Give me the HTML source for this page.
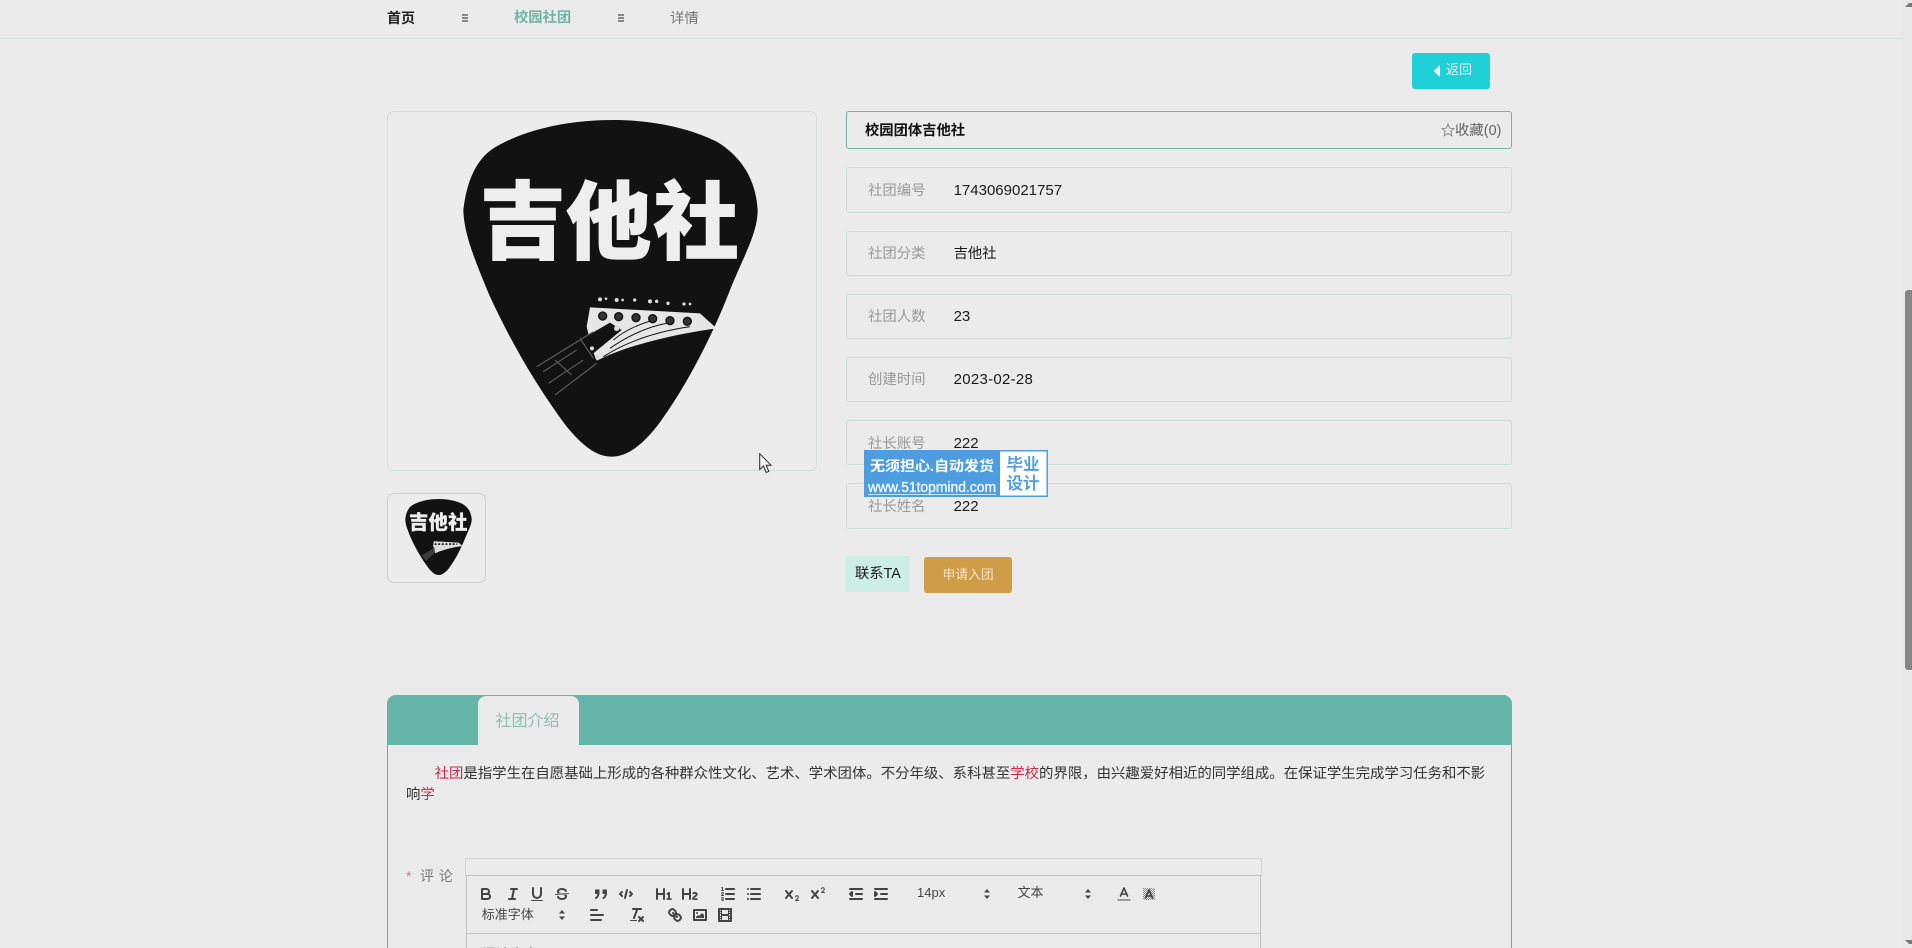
<!DOCTYPE html>
<html lang="zh"><head><meta charset="utf-8"><title>校园社团详情</title>
<style>
html,body{margin:0;padding:0;width:1912px;height:948px;overflow:hidden;background:#ebebeb}
body{position:relative;font-family:"Liberation Sans","Noto Sans CJK SC",sans-serif;font-size:14.4px;color:#333}
.a{position:absolute;box-sizing:border-box}
.t{position:absolute;line-height:20px;white-space:nowrap}
.row{position:absolute;left:846px;width:666px;box-sizing:border-box;border:1px solid #cddcd8;border-radius:3px}
.lb{color:#9a9a9a;left:868px}
.v{color:#1a1a1a;left:953.6px;font-size:15px}
.i{position:absolute;width:18px;height:18px;fill:none;stroke:#444;stroke-width:2;stroke-linecap:round;stroke-linejoin:round}
.i .f{fill:#444;stroke:none}
.i .n{stroke-width:1}
.p{color:#444;font-size:13px}
em{font-style:normal;color:#cc2a45}
</style></head><body>

<!-- header -->
<div class="a" style="left:0;top:38px;width:1903px;height:1px;background:#d6dfdc"></div>
<div class="t" style="left:387px;top:8px;font-size:14px;font-weight:700;color:#222">首页</div>
<svg class="a" style="left:461px;top:14px" width="8" height="8" viewBox="0 0 8 8"><path d="M1 1H7M1 4H7M1 7H7" stroke="#222" stroke-width="1"/></svg>
<div class="t" style="left:514px;top:8px;font-size:14.3px;font-weight:700;color:#6fb5a8">校园社团</div>
<svg class="a" style="left:617px;top:14px" width="8" height="8" viewBox="0 0 8 8"><path d="M1 1H7M1 4H7M1 7H7" stroke="#222" stroke-width="1"/></svg>
<div class="t" style="left:670px;top:9px;font-size:14.4px;color:#777">详情</div>

<!-- back -->
<div class="a" style="left:1412px;top:53px;width:78px;height:36px;background:#1fd0d9;border-radius:3px"></div>
<svg class="a" style="left:1433px;top:65px" width="8" height="12" viewBox="0 0 8 12"><path d="M7 0V12L1 6.5V5.5Z" fill="#e9fbfc"/></svg>
<div class="t" style="left:1446px;top:60px;font-size:13px;color:#d6f6f8">返回</div>

<!-- big image -->
<div class="a" style="left:387px;top:111px;width:430px;height:360px;border:1px solid #d2e0dc;border-radius:7px;background:#ececec"></div>
<svg class="a" style="left:380px;top:100px" width="460" height="380" viewBox="0 0 1380 1140">
<path d="M700 60C560 60 430 90 340 145C295 175 262 230 250 330C252 400 280 470 330 590C390 720 470 860 560 980C610 1040 650 1070 695 1070C745 1070 790 1030 830 980C920 860 1000 700 1050 570C1090 470 1133 400 1133 330C1128 240 1085 170 1010 125C930 85 820 60 700 60Z" fill="#121212"/>
<g font-family="'Noto Sans CJK SC',sans-serif" font-weight="900" font-size="256" fill="#eee" stroke="#eee" stroke-width="3">
<text x="300" y="457">吉</text><text x="558" y="457">他</text><text x="820" y="457">社</text></g>
<path d="M630 622L960 640L1010 685C900 700 760 730 665 775L650 782L635 745L620 680Z" fill="#e6e6e6"/>
<path d="M600 720L690 668L725 690L640 760Z" fill="#121212"/>
<path d="M470 800L640 695M525 885L650 790M525 780L575 825M600 715L640 775M490 815L590 750M505 850L610 780" stroke="#666" stroke-width="3" fill="none"/>
<g stroke="#121212" stroke-width="3" fill="none"><path d="M670 770C740 725 830 695 930 680M690 745C740 710 800 680 870 668M700 720C730 695 770 675 815 662"/></g>
<g fill="#333" stroke="#121212" stroke-width="4"><circle cx="668" cy="648" r="12"/><circle cx="716" cy="650" r="12"/><circle cx="768" cy="653" r="12"/><circle cx="818" cy="656" r="12"/><circle cx="870" cy="662" r="12"/><circle cx="922" cy="664" r="12"/></g>
<g fill="#ddd"><circle cx="660" cy="598" r="6"/><circle cx="678" cy="596" r="4"/><circle cx="710" cy="600" r="6"/><circle cx="728" cy="600" r="4"/><circle cx="764" cy="600" r="5"/><circle cx="810" cy="604" r="6"/><circle cx="830" cy="604" r="5"/><circle cx="864" cy="610" r="5"/><circle cx="912" cy="612" r="5"/><circle cx="930" cy="612" r="4"/><circle cx="652" cy="771" r="7"/><circle cx="636" cy="745" r="6"/><circle cx="710" cy="685" r="8"/></g>
</svg>

<!-- thumb -->
<div class="a" style="left:387px;top:493px;width:99px;height:90px;border:1px solid #d0d0d0;border-radius:7px;background:#ececec"></div>
<svg class="a" style="left:405px;top:499px" width="67" height="76" viewBox="250 60 883 1010">
<path d="M700 60C560 60 430 90 340 145C295 175 262 230 250 330C252 400 280 470 330 590C390 720 470 860 560 980C610 1040 650 1070 695 1070C745 1070 790 1030 830 980C920 860 1000 700 1050 570C1090 470 1133 400 1133 330C1128 240 1085 170 1010 125C930 85 820 60 700 60Z" fill="#121212"/>
<g font-family="'Noto Sans CJK SC',sans-serif" font-weight="900" font-size="256" fill="#eee" stroke="#eee" stroke-width="3">
<text x="300" y="457">吉</text><text x="558" y="457">他</text><text x="820" y="457">社</text></g>
<path d="M630 622L960 640L1010 685C900 700 760 730 665 775L650 782L620 680Z" fill="#ddd"/>
<path d="M640 660H940" stroke="#222" stroke-width="24" stroke-dasharray="26 22"/>
<path d="M470 810L650 700L640 780L525 885Z" fill="#666" opacity=".5"/>
</svg>

<!-- title -->
<div class="a" style="left:846px;top:111px;width:666px;height:38px;border:1px solid #6fb3a7;border-radius:3px"></div>
<div class="t" style="left:865px;top:121px;font-size:14.3px;font-weight:700;color:#111">校园团体吉他社</div>
<svg class="a" style="left:1441px;top:123px" width="14" height="14" viewBox="0 0 14 14"><path d="M7 1.2L8.7 5.2L13 5.6L9.8 8.4L10.8 12.7L7 10.5L3.2 12.7L4.2 8.4L1 5.6L5.3 5.2Z" fill="none" stroke="#8a8a8a"/></svg>
<div class="t" style="left:1455px;top:121px;font-size:14.4px;color:#666">收藏(0)</div>

<!-- rows -->
<div class="row" style="top:167px;height:46px"></div>
<div class="t lb" style="top:181px">社团编号</div><div class="t v" style="top:181px">1743069021757</div>
<div class="row" style="top:231px;height:45px"></div>
<div class="t lb" style="top:244px">社团分类</div><div class="t v" style="top:244px;font-size:14.3px">吉他社</div>
<div class="row" style="top:294px;height:45px"></div>
<div class="t lb" style="top:307px">社团人数</div><div class="t v" style="top:307px">23</div>
<div class="row" style="top:357px;height:45px"></div>
<div class="t lb" style="top:370px">创建时间</div><div class="t v" style="top:370px;letter-spacing:.28px">2023-02-28</div>
<div class="row" style="top:420px;height:45px"></div>
<div class="t lb" style="top:434px">社长账号</div><div class="t v" style="top:434px">222</div>
<div class="row" style="top:483px;height:46px"></div>
<div class="t lb" style="top:497px">社长姓名</div><div class="t v" style="top:497px">222</div>

<!-- watermark -->
<svg class="a" style="left:864px;top:450px" width="184" height="47" viewBox="0 0 184 47">
<rect width="184" height="47" fill="#4e9de0"/><rect x="136" y="1.5" width="46.5" height="44" fill="#fff"/>
<g font-family="'Liberation Sans','Noto Sans CJK SC',sans-serif">
<text x="6" y="21" font-size="14" font-weight="700" fill="#fff" textLength="124" lengthAdjust="spacingAndGlyphs">无须担心.自动发货</text>
<text x="4" y="42" font-size="14.5" font-weight="400" stroke="#fff" stroke-width=".3" fill="#f0f6fd" textLength="128" lengthAdjust="spacingAndGlyphs">www.51topmind.com</text></g>
<rect x="4" y="44" width="128" height="1" fill="#cfe3f7"/>
<g font-family="'Noto Sans CJK SC',sans-serif" font-size="16.5" font-weight="500" stroke="#4e9de0" stroke-width=".3" fill="#4e9de0" text-anchor="middle">
<text x="159" y="20">毕业</text><text x="159" y="39">设计</text></g>
</svg>

<!-- buttons -->
<div class="a" style="left:846px;top:556px;width:64px;height:36px;background:#cdeee7"></div>
<div class="t" style="left:855px;top:564px;font-size:14.3px;color:#1a1a1a">联系TA</div>
<div class="a" style="left:924px;top:557px;width:88px;height:36px;background:#cf9c48;border-radius:3px"></div>
<div class="t" style="left:942.5px;top:564.5px;font-size:12.8px;color:#f6e5c8">申请入团</div>

<!-- section -->
<div class="a" style="left:387px;top:695px;width:1125px;height:280px;border:1px solid #5fb2a5;border-radius:9px 9px 0 0"></div>
<div class="a" style="left:387px;top:695px;width:1125px;height:50px;background:#66b5aa;border-radius:9px 9px 0 0"></div>
<div class="a" style="left:478px;top:696px;width:101px;height:49px;background:#ebebeb;border-radius:8px 8px 0 0"></div>
<div class="t" style="left:495.5px;top:712px;font-size:16px;color:#8dbfb4">社团介绍</div>
<div class="t" style="left:434.6px;top:764px;font-size:14.4px"><em>社团</em>是指学生在自愿基础上形成的各种群众性文化、艺术、学术团体。不分年级、系科甚至<em>学校</em>的界限，由兴趣爱好相近的同学组成。在保证学生完成学习任务和不影</div>
<div class="t" style="left:406px;top:783.5px;font-size:14.4px;transform:translateY(1px)">响<em>学</em></div>

<!-- comment -->
<div class="t" style="left:406px;top:866px;font-size:14px;color:#e0708a">*</div>
<div class="t" style="left:420px;top:866px;font-size:14px;color:#777;word-spacing:1px">评 论</div>
<div class="a" style="left:465px;top:858px;width:797px;height:19px;border:1px solid #d4d4d4;border-bottom:0"></div>
<div class="a" style="left:466px;top:875px;width:795px;height:100px;border:1px solid #c4c4c4"></div>
<div class="a" style="left:466px;top:933px;width:795px;height:1px;background:#c4c4c4"></div>
<div class="t" style="left:482px;top:944px;font-size:14px;color:#888">评论内容</div>

<!-- toolbar row 1 -->
<svg class="i" style="left:477px;top:885px" viewBox="0 0 18 18"><path d="M5,4H9.5A2.5,2.5,0,0,1,12,6.5v0A2.5,2.5,0,0,1,9.5,9H5A0,0,0,0,1,5,9V4A0,0,0,0,1,5,4Z"/><path d="M5,9h5.5A2.5,2.5,0,0,1,13,11.5v0A2.5,2.5,0,0,1,10.5,14H5a0,0,0,0,1,0,0V9A0,0,0,0,1,5,9Z"/></svg>
<svg class="i" style="left:504px;top:885px" viewBox="0 0 18 18"><line x1="7" x2="13" y1="4" y2="4"/><line x1="5" x2="11" y1="14" y2="14"/><line x1="8" x2="10" y1="14" y2="4"/></svg>
<svg class="i" style="left:528px;top:885px" viewBox="0 0 18 18"><path d="M5,3V9a4.012,4.012,0,0,0,4,4H9a4.012,4.012,0,0,0,4-4V3"/><rect class="f" height="1" rx=".5" ry=".5" width="12" x="3" y="15"/></svg>
<svg class="i" style="left:553px;top:885px" viewBox="0 0 18 18"><line class="n" x1="15.5" x2="2.5" y1="8.5" y2="9.5"/><path class="f" d="M9.007,8C6.542,7.791,6,7.519,6,6.5,6,5.792,7.283,5,9,5c1.571,0,2.765.679,2.969,1.309a1,1,0,0,0,1.9-.617C13.356,4.106,11.354,3,9,3,6.2,3,4,4.538,4,6.5a3.2,3.2,0,0,0,.5,1.843Z"/><path class="f" d="M8.984,10C11.457,10.208,12,10.479,12,11.5c0,.708-1.283,1.5-3,1.5-1.571,0-2.765-.679-2.969-1.309a1,1,0,1,0-1.9.617C4.644,13.894,6.646,15,9,15c2.8,0,5-1.538,5-3.5a3.2,3.2,0,0,0-.5-1.843Z"/></svg>
<svg class="i" style="left:592px;top:885px" viewBox="0 0 18 18"><rect x="3" y="4.5" width="4.5" height="4.5" style="fill:#444;stroke:none"/><rect x="10.5" y="4.5" width="4.5" height="4.5" style="fill:#444;stroke:none"/><path d="M6.5,8c0,3.5-2.5,5-2.5,5"/><path d="M14,8c0,3.5-2.5,5-2.5,5"/></svg>
<svg class="i" style="left:617px;top:885px" viewBox="0 0 18 18"><polyline points="5 7 3 9 5 11"/><polyline points="13 7 15 9 13 11"/><line x1="10" x2="8" y1="5" y2="13"/></svg>
<svg class="i" style="left:655px;top:885px" viewBox="0 0 18 18"><path class="f" d="M10,4V14a1,1,0,0,1-2,0V10H3v4a1,1,0,0,1-2,0V4A1,1,0,0,1,3,4V8H8V4a1,1,0,0,1,2,0Zm6.06787,9.209H14.98975V7.59863a.54085.54085,0,0,0-.605-.60547h-.62744a1.01119,1.01119,0,0,0-.748.29688L11.645,8.56641a.5435.5435,0,0,0-.022.8584l.28613.30762a.53861.53861,0,0,0,.84717.0332l.09912-.08789a1.2137,1.2137,0,0,0,.2417-.35254h.02246s-.01123.30859-.01123.60547V13.209H12.041a.54085.54085,0,0,0-.605.60547v.43945a.54085.54085,0,0,0,.605.60547h4.02686a.54085.54085,0,0,0,.605-.60547v-.43945A.54085.54085,0,0,0,16.06787,13.209Z"/></svg>
<svg class="i" style="left:681px;top:885px" viewBox="0 0 18 18"><path class="f" d="M16.73975,13.81445v.43945a.54085.54085,0,0,1-.605.60547H11.855a.58392.58392,0,0,1-.64893-.60547V14.0127c0-2.90527,3.39941-3.42187,3.39941-4.55469a.77675.77675,0,0,0-.84717-.78125,1.17684,1.17684,0,0,0-.83594.38477c-.2749.26367-.561.374-.85791.13184l-.4292-.34082c-.30811-.24219-.38525-.51758-.1543-.81445a2.97155,2.97155,0,0,1,2.45361-1.17676,2.45393,2.45393,0,0,1,2.68408,2.40918c0,2.45312-3.1792,2.92676-3.27832,3.93848h2.79443A.54085.54085,0,0,1,16.73975,13.81445ZM9,3A.99974.99974,0,0,0,8,4V8H3V4A1,1,0,0,0,1,4V14a1,1,0,0,0,2,0V10H8v4a1,1,0,0,0,2,0V4A.99974.99974,0,0,0,9,3Z"/></svg>
<svg class="i" style="left:719px;top:885px" viewBox="0 0 18 18"><line x1="7" x2="15" y1="4" y2="4"/><line x1="7" x2="15" y1="9" y2="9"/><line x1="7" x2="15" y1="14" y2="14"/><line class="n" x1="2.5" x2="4.5" y1="5.5" y2="5.5"/><path class="f" d="M3.5,6A0.5,0.5,0,0,1,3,5.5V3.085l-0.276.138A0.5,0.5,0,0,1,2.053,3c-0.124-.247-0.023-0.324.224-0.447l1-.5A0.5,0.5,0,0,1,4,2.5v3A0.5,0.5,0,0,1,3.5,6Z"/><path class="n" d="M4.5,10.5h-2c0-.234,1.85-1.076,1.85-2.234A0.959,0.959,0,0,0,2.5,8.156"/><path class="n" d="M2.5,14.846a0.959,0.959,0,0,0,1.85-.109A0.7,0.7,0,0,0,3.75,14a0.688,0.688,0,0,0,.6-0.736,0.959,0.959,0,0,0-1.85-.109"/></svg>
<svg class="i" style="left:745px;top:885px" viewBox="0 0 18 18"><line x1="6" x2="15" y1="4" y2="4"/><line x1="6" x2="15" y1="9" y2="9"/><line x1="6" x2="15" y1="14" y2="14"/><line x1="3" x2="3" y1="4" y2="4"/><line x1="3" x2="3" y1="9" y2="9"/><line x1="3" x2="3" y1="14" y2="14"/></svg>
<svg class="i" style="left:783px;top:885px" viewBox="0 0 18 18"><path class="f" d="M15.5,15H13.861a3.858,3.858,0,0,0,1.914-2.975,1.8,1.8,0,0,0-1.6-1.751A1.921,1.921,0,0,0,12.021,11.7a0.50013,0.50013,0,1,0,.957.291h0a0.914,0.914,0,0,1,1.053-.725,0.81,0.81,0,0,1,.744.762c0,1.076-1.16971,1.86982-1.93971,2.43082A1.45639,1.45639,0,0,0,12,15.5a0.5,0.5,0,0,0,.5.5h3A0.5,0.5,0,0,0,15.5,15Z"/><path class="f" d="M9.65,5.241a1,1,0,0,0-1.409.108L6,7.964,3.759,5.349A1,1,0,0,0,2.192,6.59178Q2.21541,6.6213,2.241,6.649L4.684,9.5,2.241,12.35A1,1,0,0,0,3.71,13.70722q0.02557-.02768.049-0.05722L6,11.036,8.241,13.65a1,1,0,1,0,1.567-1.24277Q9.78459,12.3777,9.759,12.35L7.316,9.5,9.759,6.651A1,1,0,0,0,9.65,5.241Z"/></svg>
<svg class="i" style="left:809px;top:885px" viewBox="0 0 18 18"><path class="f" d="M15.5,7H13.861a4.015,4.015,0,0,0,1.914-2.975,1.8,1.8,0,0,0-1.6-1.751A1.922,1.922,0,0,0,12.021,3.7a0.5,0.5,0,1,0,.957.291,0.917,0.917,0,0,1,1.053-.725,0.81,0.81,0,0,1,.744.762c0,1.077-1.164,1.925-1.934,2.486A1.423,1.423,0,0,0,12,7.5a0.5,0.5,0,0,0,.5.5h3A0.5,0.5,0,0,0,15.5,7Z"/><path class="f" d="M9.651,5.241a1,1,0,0,0-1.41.108L6,7.964,3.759,5.349a1,1,0,1,0-1.519,1.3L4.683,9.5,2.241,12.35a1,1,0,1,0,1.519,1.3L6,11.036,8.241,13.65a1,1,0,0,0,1.519-1.3L7.317,9.5,9.759,6.651A1,1,0,0,0,9.651,5.241Z"/></svg>
<svg class="i" style="left:847px;top:885px" viewBox="0 0 18 18"><line x1="3" x2="15" y1="14" y2="14"/><line x1="3" x2="15" y1="4" y2="4"/><line x1="9" x2="15" y1="9" y2="9"/><polyline style="fill:#444" points="5 7 5 11 3 9 5 7"/></svg>
<svg class="i" style="left:872px;top:885px" viewBox="0 0 18 18"><line x1="3" x2="15" y1="14" y2="14"/><line x1="3" x2="15" y1="4" y2="4"/><line x1="9" x2="15" y1="9" y2="9"/><polyline style="fill:#444" points="3 7 3 11 5 9 3 7"/></svg>
<div class="t p" style="left:917px;top:883px">14px</div>
<svg class="i" style="left:978px;top:885px" viewBox="0 0 18 18"><path class="f" d="M6 7.5L9 4L12 7.5ZM6 10.5H12L9 14Z"/></svg>
<div class="t p" style="left:1017.5px;top:883px">文本</div>
<svg class="i" style="left:1079px;top:885px" viewBox="0 0 18 18"><path class="f" d="M6 7.5L9 4L12 7.5ZM6 10.5H12L9 14Z"/></svg>
<svg class="i" style="left:1115px;top:885px" viewBox="0 0 18 18"><line class="n" x1="3" x2="15" y1="15" y2="15"/><polyline style="stroke-width:1.6" points="5.5 11 9 3 12.5 11"/><line style="stroke-width:1.6" x1="11.63" x2="6.38" y1="9" y2="9"/></svg>
<svg class="i" style="left:1140px;top:885px" viewBox="0 0 18 18"><defs><pattern id="dt" width="2" height="2" patternUnits="userSpaceOnUse"><rect width="1" height="1" fill="#8a8a8a" stroke="none"/><rect x="1" y="1" width="1" height="1" fill="#8a8a8a" stroke="none"/></pattern></defs><rect x="3" y="3" width="12" height="12" fill="url(#dt)" stroke="none"/><polyline style="stroke-width:1.6" points="5.5 13 9 5 12.5 13"/><line style="stroke-width:1.6" x1="11.63" x2="6.38" y1="11" y2="11"/></svg>

<!-- toolbar row 2 -->
<div class="t p" style="left:481.7px;top:905px">标准字体</div>
<svg class="i" style="left:553px;top:906px" viewBox="0 0 18 18"><path class="f" d="M6 7.5L9 4L12 7.5ZM6 10.5H12L9 14Z"/></svg>
<svg class="i" style="left:588px;top:906px" viewBox="0 0 18 18"><line x1="3" x2="15" y1="9" y2="9"/><line x1="3" x2="13" y1="14" y2="14"/><line x1="3" x2="9" y1="4" y2="4"/></svg>
<svg class="i" style="left:628px;top:906px" viewBox="0 0 18 18"><line x1="5" x2="13" y1="3" y2="3"/><line x1="6" x2="9.35" y1="12" y2="3"/><line x1="11" x2="15" y1="11" y2="15"/><line x1="15" x2="11" y1="11" y2="15"/><rect class="f" height="1" rx="0.5" ry="0.5" width="7" x="2" y="14"/></svg>
<svg class="i" style="left:666px;top:906px" viewBox="0 0 18 18"><line x1="7" x2="11" y1="7" y2="11"/><path d="M8.9,4.577a3.476,3.476,0,0,1,.36,4.679A3.476,3.476,0,0,1,4.577,8.9C3.185,7.5,2.035,6.4,4.217,4.217S7.5,3.185,8.9,4.577Z"/><path d="M13.423,9.1a3.476,3.476,0,0,0-4.679-.36,3.476,3.476,0,0,0,.36,4.679c1.392,1.392,2.5,2.542,4.679.36S14.815,10.5,13.423,9.1Z"/></svg>
<svg class="i" style="left:691px;top:906px" viewBox="0 0 18 18"><rect height="10" width="12" x="3" y="4"/><circle class="f" cx="6" cy="7" r="1"/><polyline class="f" points="5 12 5 11 7 9 8 10 11 7 13 9 13 12 5 12"/></svg>
<svg class="i" style="left:716px;top:906px" viewBox="0 0 18 18"><rect height="12" width="12" x="3" y="3"/><rect class="f" height="12" width="1" x="5" y="3"/><rect class="f" height="12" width="1" x="12" y="3"/><rect class="f" height="2" width="8" x="5" y="8"/><rect class="f" height="1" width="3" x="3" y="5"/><rect class="f" height="1" width="3" x="3" y="7"/><rect class="f" height="1" width="3" x="3" y="10"/><rect class="f" height="1" width="3" x="3" y="12"/><rect class="f" height="1" width="3" x="12" y="5"/><rect class="f" height="1" width="3" x="12" y="7"/><rect class="f" height="1" width="3" x="12" y="10"/><rect class="f" height="1" width="3" x="12" y="12"/></svg>

<!-- cursor -->
<svg class="a" style="left:759px;top:453px" width="14" height="21" viewBox="0 0 14 21"><path d="M.7.7V16.5L4.5 13L7.2 19.5L9.8 18.4L7.2 12.2H12Z" fill="#f4f4f4" stroke="#2a2a2a"/></svg>

<!-- scrollbar -->
<div class="a" style="left:1902px;top:0;width:10px;height:948px;background:#e8e8e8"></div>
<div class="a" style="left:1905px;top:290px;width:7px;height:380px;background:#858585;border-radius:3px 0 0 3px"></div>
<svg class="a" style="left:1905px;top:2px" width="7" height="6" viewBox="0 0 7 6"><path d="M0 5L4 1H7V5Z" fill="#777"/></svg>
<svg class="a" style="left:1905px;top:939px" width="7" height="6" viewBox="0 0 7 6"><path d="M0 1L4 5H7V1Z" fill="#777"/></svg>
</body></html>
